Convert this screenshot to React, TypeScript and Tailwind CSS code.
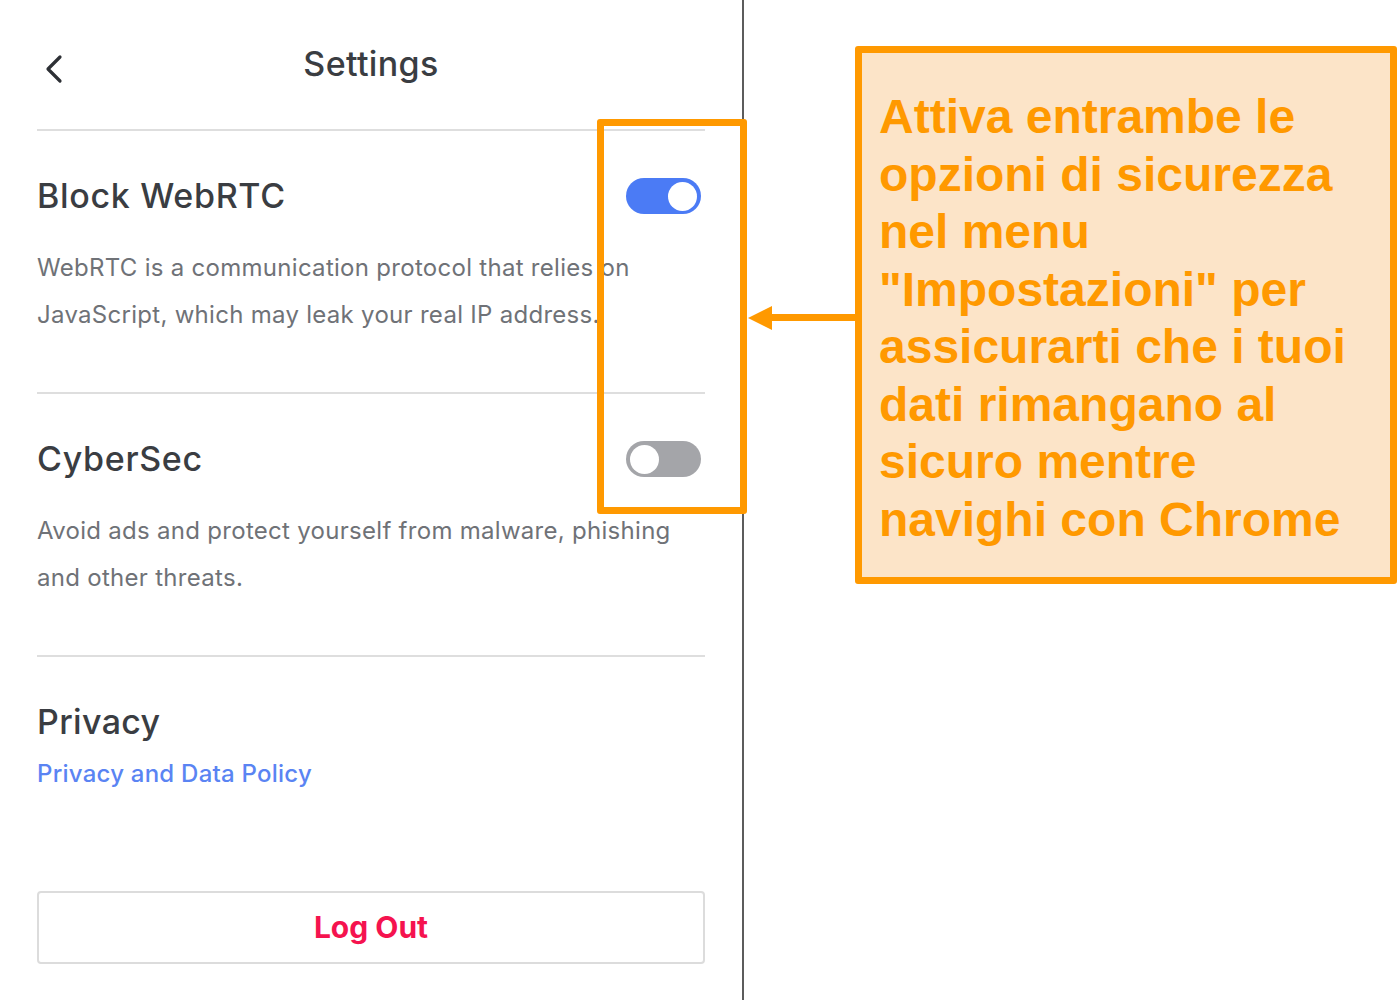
import React from "react";

const Toggle = ({ on }: { on: boolean }) => (
  <div
    className={`flex h-[36px] w-[75px] items-center rounded-full px-[4px] ${
      on ? "justify-end bg-[#4b7bf5]" : "justify-start bg-[#a4a5a9]"
    }`}
  >
    <div className="h-[29px] w-[29px] rounded-full bg-white" />
  </div>
);

const Section = ({ title, desc, on }: { title: string; desc: string[]; on: boolean }) => (
  <div className="border-b-2 border-[#dedede] pt-[45px] pb-[54px]">
    <div className="flex items-center justify-between pr-[4px]">
      <h2 className="text-[34px] leading-[40px] font-medium tracking-[0.02em] text-[#3a3d42]">{title}</h2>
      <Toggle on={on} />
    </div>
    <p className="mt-[28px] text-[24px] leading-[47px] tracking-[0.012em] text-[#6f7277]">
      {desc[0]}
      <br />
      {desc[1]}
    </p>
  </div>
);

export default function App() {
  return (
    <div
      className="relative flex h-[1000px] w-[1398px] overflow-hidden bg-white"
      style={{ fontFamily: "Inter, 'Noto Sans', sans-serif" }}
    >
      {/* settings panel */}
      <div className="flex h-full w-[744px] flex-col border-r-2 border-[#5c5c5c] px-[37px]">
        <div className="relative flex h-[131px] items-center justify-center border-b-2 border-[#dedede] pb-[2px]">
          <svg
            className="absolute left-[6px] top-[54px]"
            width="22"
            height="30"
            viewBox="0 0 22 30"
            fill="none"
            stroke="#2d3035"
            strokeWidth="3.2"
            strokeLinecap="round"
            strokeLinejoin="round"
          >
            <path d="M17 3 L5 15 L17 27" />
          </svg>
          <h1 className="text-[34px] font-medium tracking-[0.01em] text-[#3a3d42]">Settings</h1>
        </div>

        <Section
          title="Block WebRTC"
          on
          desc={[
            "WebRTC is a communication protocol that relies on",
            "JavaScript, which may leak your real IP address.",
          ]}
        />
        <Section
          title="CyberSec"
          on={false}
          desc={[
            "Avoid ads and protect yourself from malware, phishing",
            "and other threats.",
          ]}
        />

        <div className="pt-[45px]">
          <h2 className="text-[34px] leading-[40px] font-medium tracking-[0.01em] text-[#3a3d42]">Privacy</h2>
          <a className="mt-[17px] block text-[24px] leading-[30px] font-medium tracking-[0.01em] text-[#5a84f3]">
            Privacy and Data Policy
          </a>
        </div>

        <button className="mt-[102px] flex h-[73px] w-full items-center justify-center rounded-[4px] border-2 border-[#dcdcdc] bg-white text-[30px] font-bold text-[#f5134f]">
          Log Out
        </button>
      </div>

      {/* callout */}
      <div className="ml-[111px] mt-[46px] h-[538px] w-[542px] rounded-[3px] border-[7px] border-[#ff9900] bg-[#fce4c8] pl-[17px] pt-[35px]">
        <p
          className="text-[48px] leading-[57.5px] font-bold text-[#ff9900]"
          style={{ fontFamily: "'Liberation Sans', Arial, sans-serif" }}
        >
          Attiva entrambe le
          <br />
          opzioni di sicurezza
          <br />
          nel menu
          <br />
          "Impostazioni" per
          <br />
          assicurarti che i tuoi
          <br />
          dati rimangano al
          <br />
          sicuro mentre
          <br />
          navighi con Chrome
        </p>
      </div>

      {/* highlight around the toggles */}
      <div className="absolute left-[597px] top-[119px] h-[395px] w-[150px] rounded-[3px] border-[7px] border-[#ff9900]" />

      {/* arrow */}
      <svg className="absolute left-[746px] top-[304px]" width="114" height="28" viewBox="0 0 114 28">
        <rect x="22" y="10" width="92" height="7" fill="#ff9900" />
        <polygon points="2,14 26,2 26,26" fill="#ff9900" />
      </svg>
    </div>
  );
}
